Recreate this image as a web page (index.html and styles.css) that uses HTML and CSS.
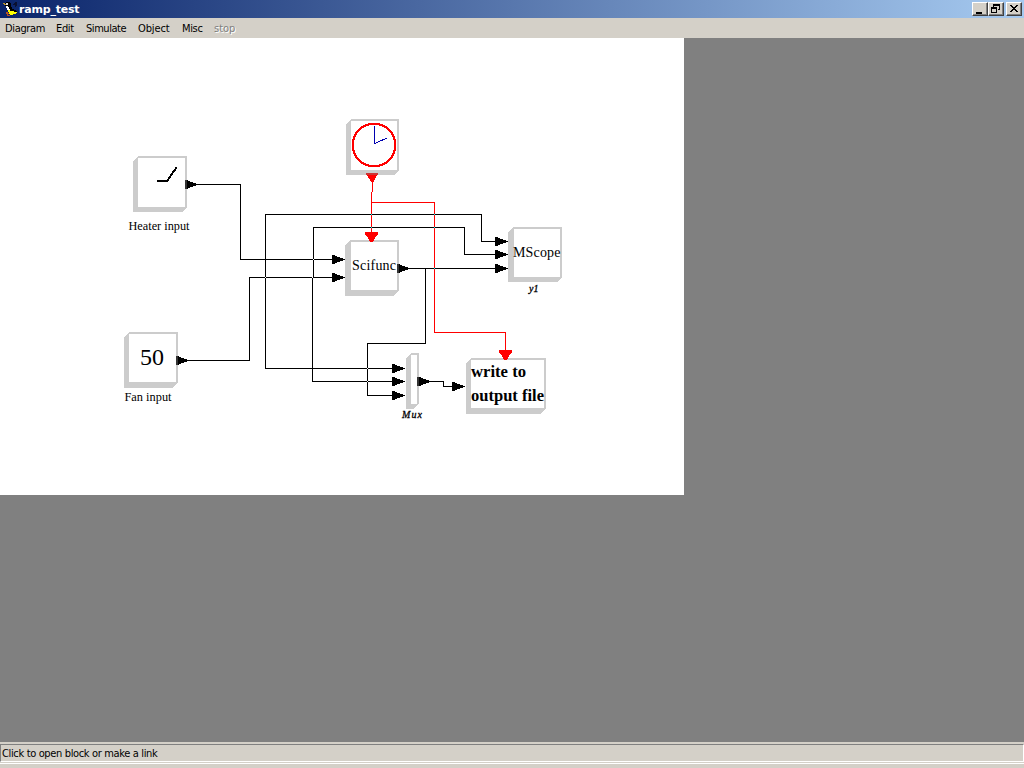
FILE: index.html
```html
<!DOCTYPE html>
<html lang="en">
<head>
<meta charset="utf-8">
<title>ramp_test</title>
<link rel="stylesheet" href="styles.css">
</head>
<body>
<div class="window">
  <header class="titlebar">
    <svg class="logo" width="16" height="16" viewBox="0 0 16 16" shape-rendering="crispEdges">
      <path d="M3 1h4v1h1v4h1v2h2v1h2v1h1v2h-4v-1H7v-1H5V8H4V5H2V2h1z" fill="#000"/>
      <path d="M10 3h1V2h1V1h2v4h-1v1h-1V4h-2z" fill="#0a1030"/>
      <path d="M3 2h2v2H3z" fill="#ddd"/><path d="M3 5h2v1h1v2h1v2H5V9H4V7H3z" fill="#fff"/>
      <path d="M0 2h2v1h1v1H1V3H0z" fill="#b89030"/>
      <path d="M3 11h2v1h2v1H5v1h2v1H4v-2H3z" fill="#b85020"/>
      <path d="M5 9h2v1h4v1h3v1h-1v1h-3v1H7v-1H6v-2H5z" fill="#ff0"/>
    </svg>
    <span class="title">ramp_test</span>
    <div class="controls">
      <span class="control"><svg width="14" height="12" shape-rendering="crispEdges"><path d="M3 9h6v2H3z"/></svg></span>
      <span class="control"><svg width="14" height="12" shape-rendering="crispEdges"><path fill-rule="evenodd" d="M4 1h7v6H9V6h1V3H5v1H4zM2 4h6v6H2zM3 6v3h4V6z"/></svg></span>
      <span class="control close"><svg width="14" height="12" shape-rendering="crispEdges"><path d="M3 2h2v1h1v1h2V3h1V2h2v1h-1v1H9v1H8v1h1v1h1v1h1v1H9V8H8V7H6v1H5v1H3V8h1V7h1V6h1V5H5V4H4V3H3z"/></svg></span>
    </div>
  </header>
  <nav class="menu">
    <span class="item diagram">Diagram</span><span class="item edit">Edit</span><span class="item simulate">Simulate</span><span class="item object">Object</span><span class="item misc">Misc</span><span class="item stop">stop</span>
  </nav>
  <main class="workspace">
    <svg class="canvas" width="684" height="457" viewBox="0 38 684 457">
      <defs>
        <path id="right" d="M0-4.500H3V-3.500H5V-2.500H8V-1.500H11V-.500H13V.500H11V1.500H8V2.500H5V3.500H3V4.500H0z"/>
        <path id="down" d="M-6.500-5H6.500V-2H5.500V-1H4.500V0H3.500V2H2.500V4H1.500V5H-1.500V4H-2.500V2H-3.500V0H-4.500V-1H-5.500V-2H-6.500z"/>
      </defs>
      <g class="blocks">
        <path class="shadow" d="M133 161l5-5h49v51l-5 5h-49z"/><path class="face" d="M138 158h47v49h-47z"/>
        <path class="shadow" d="M346 124l5-5h48v51l-5 5h-48z"/><path class="face" d="M351 121h46v49h-46z"/>
        <path class="shadow" d="M345 245l6-5h48v50l-5 6h-49z"/><path class="face" d="M351 242h46v48h-46z"/>
        <path class="shadow" d="M508 232l6-5h48v50l-5 5h-49z"/><path class="face" d="M514 229h46v48h-46z"/>
        <path class="shadow" d="M124 337l5-5h49v50l-6 6h-48z"/><path class="face" d="M129 334h47v48h-47z"/>
        <path class="shadow" d="M406 358l5-5h8v50l-5 6h-8z"/><path class="face" d="M411 355h6v49h-6z"/>
        <path class="shadow" d="M466 363l5-5h75v50l-5 6h-75z"/><path class="face" d="M471 360h73v48h-73z"/>
      </g>
      <g class="wires">
        <path d="M198 184.500H240.500V259.500H332"/>
        <path d="M189 360.500H249.500V277.500H332"/>
        <path d="M392 368.500H265.500V214.500H481.500V241.500H495"/>
        <path d="M392 381.500H312.500V277.500M313.500 278V227.500H464.500V254.500H495"/>
        <path d="M410 268.500H495M425.500 268V343.500H367.500V395.500H392"/>
        <path d="M431 381.500H443.500V386.500H452"/>
      </g>
      <path class="cross" d="M313 259h1v1h-1zM265 277h1v1h-1zM312 277h1v1h-1zM367 368h1v1h-1zM367 381h1v1h-1z"/>
      <path class="event" d="M372.500 183V192M371.500 192V232M371 202.500H434.500V332.500H505.500V351"/>
      <path class="event-cross" d="M371 214h1v1h-1zM371 227h1v1h-1zM434 214h1v1h-1zM434 227h1v1h-1zM434 268h1v1h-1z"/>
      <g class="ports">
        <use href="#right" x="185" y="184.500"/><use href="#right" x="176" y="360.500"/>
        <use href="#right" x="332" y="259.500"/><use href="#right" x="332" y="277.500"/>
        <use href="#right" x="397" y="268.500"/>
        <use href="#right" x="495" y="241.500"/><use href="#right" x="495" y="254.500"/><use href="#right" x="495" y="268.500"/>
        <use href="#right" x="392" y="368.500"/><use href="#right" x="392" y="381.500"/><use href="#right" x="392" y="395.500"/>
        <use href="#right" x="418" y="381.500"/><use href="#right" x="452" y="386.500"/>
      </g>
      <path class="overlap" d="M185 180h2v9h-2zM176 356h2v9h-2zM397 264h2v9h-2zM417 377h2v9h-2z"/>
      <g class="event-ports">
        <path d="M366 173H378V175H377V176H376V178H375V180H374V182H373V183H372V182H371V181H370V179H369V178H368V176H367V175H366z"/>
        <use href="#down" x="371.500" y="237"/><use href="#down" x="505.500" y="355"/>
      </g>
      <path class="event-overlap" d="M366 173h12v2h-12z"/>
      <path class="ramp" d="M157 181H167L176.500 167.500"/>
      <circle class="dial" cx="374" cy="145" r="21.300"/>
      <path class="hands" d="M374.500 126V143.500L387 138"/>
      <g class="labels">
        <text x="128.500" y="230" textLength="61" lengthAdjust="spacingAndGlyphs">Heater input</text>
        <text x="124.500" y="401" textLength="47" lengthAdjust="spacingAndGlyphs">Fan input</text>
        <text class="value" x="140" y="365" textLength="24">50</text>
        <text class="name" x="352" y="270" textLength="44">Scifunc</text>
        <text class="name" x="513" y="257" textLength="47.500">MScope</text>
        <text class="caption" x="529" y="292" textLength="9.500">y1</text>
        <text class="caption" x="402" y="418" textLength="20">Mux</text>
        <text class="note" x="471" y="377" textLength="55" lengthAdjust="spacingAndGlyphs">write to</text>
        <text class="note" x="471" y="401" textLength="73" lengthAdjust="spacingAndGlyphs">output file</text>
      </g>
    </svg>
  </main>
  <footer class="status"><div class="message"><span>Click to open block or make a link</span></div></footer>
</div>
</body>
</html>
```
FILE: styles.css
```css
body { margin: 0; }
.window {
  width: 1024px; height: 768px; overflow: hidden;
  display: flex; flex-direction: column;
  background: #d4d0c8; color: #000;
  font: 11px/14px "DejaVu Sans Condensed", "DejaVu Sans", sans-serif;
}
.titlebar {
  height: 18px; flex: none; display: flex; align-items: center;
  background: linear-gradient(to right, #0a246a, #a6caf0);
}
.logo { margin-left: 3px; }
.title { color: #fff; font: bold 11px/16px "DejaVu Sans", sans-serif; letter-spacing: -0.2px; padding-top: 1px; }
.controls { display: flex; margin-left: auto; padding-right: 2px; }
.control {
  width: 16px; height: 14px; box-sizing: border-box; background: #d4d0c8;
  border: 1px solid; border-color: #fff #404040 #404040 #fff;
  box-shadow: inset -1px -1px #808080;
}
.control svg { display: block; }
.close { margin-left: 2px; }
.menu { height: 20px; flex: none; box-sizing: border-box; padding: 4px 0 0 5px; display: flex; gap: 12px; }
.item { white-space: nowrap; letter-spacing: -0.35px; }
.diagram { width: 39px; }
.edit { width: 18px; }
.simulate { width: 40px; letter-spacing: -0.45px; }
.object { width: 32px; letter-spacing: -0.1px; }
.misc { width: 20px; }
.stop { color: #808080; text-shadow: 1px 1px #fff; letter-spacing: 0; }
.workspace { height: 704px; flex: none; background: #808080; }
.canvas { display: block; background: #fff; font-family: "Liberation Serif", serif; }
.shadow { fill: #ccc; shape-rendering: crispEdges; }
.face, .cross { fill: #fff; shape-rendering: crispEdges; }
.wires { fill: none; stroke: #000; shape-rendering: crispEdges; }
.event { fill: none; stroke: #f00; shape-rendering: crispEdges; }
.event-cross { fill: #0ff; shape-rendering: crispEdges; }
.ports, .event-ports, .overlap, .event-overlap { shape-rendering: crispEdges; }
.event-ports { fill: #f00; }
.overlap { fill: #333; }
.event-overlap { fill: #c33; }
.ramp { fill: none; stroke: #000; stroke-width: 2; shape-rendering: crispEdges; }
.dial { fill: none; stroke: #f00; stroke-width: 2.2; shape-rendering: crispEdges; }
.hands { fill: none; stroke: #0000b0; shape-rendering: crispEdges; }
.labels { font-size: 12px; }
.value { font-size: 24px; }
.name { font-size: 14px; }
.caption { font-size: 10px; font-style: italic; stroke: #000; stroke-width: 0.3px; }
.note { font-size: 17px; font-weight: bold; }
.status { flex: 1; box-sizing: border-box; padding-top: 2px; }
.message {
  height: 18px; box-sizing: border-box; padding: 2px 0 0 1px;
  border: 1px solid; border-color: #808080 #fff #fff #808080;
  box-shadow: 0 1px #d4d0c8, 0 2px #fff;
}
.message span { display: block; letter-spacing: -0.35px; }
```
